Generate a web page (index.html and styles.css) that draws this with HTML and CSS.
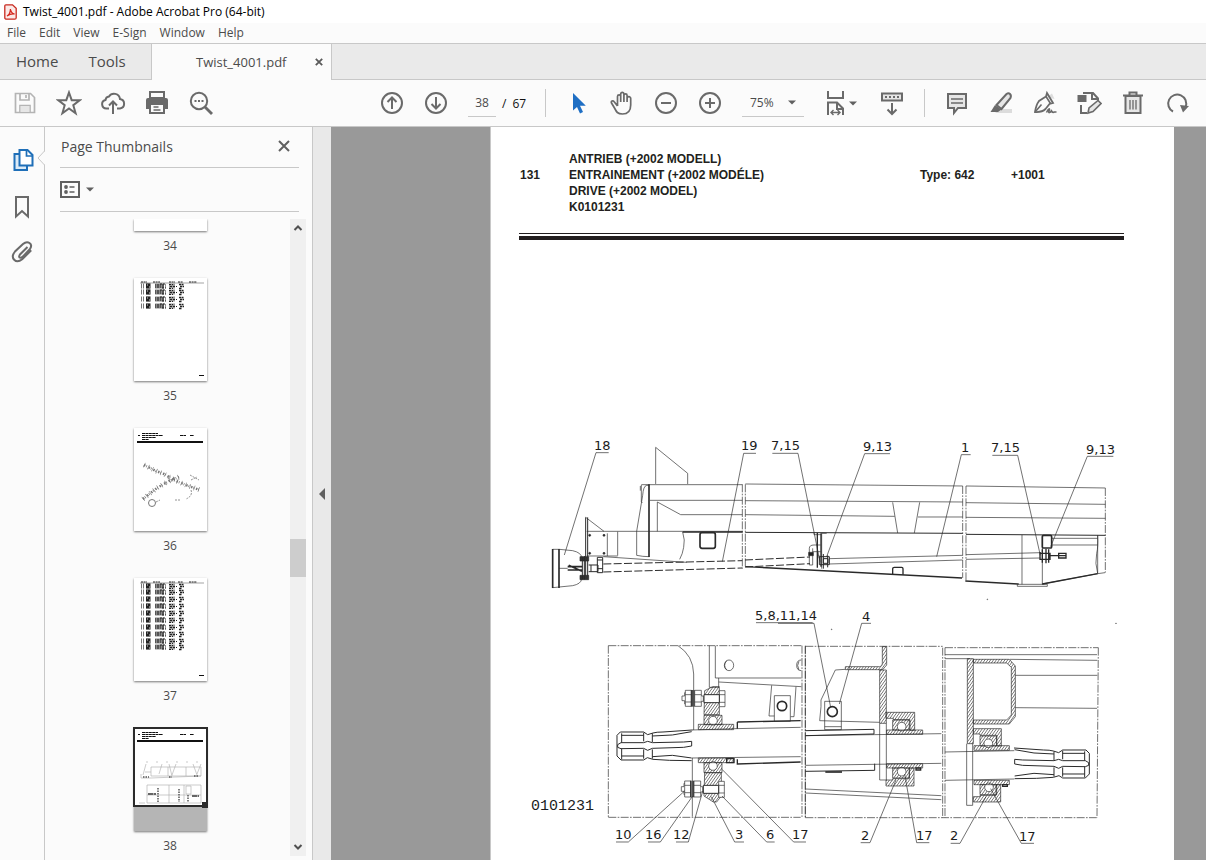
FILE: index.html
```html
<!DOCTYPE html>
<html lang="en">
<head>
<meta charset="utf-8">
<title>Twist_4001.pdf - Adobe Acrobat Pro (64-bit)</title>
<link rel="stylesheet" href="styles.css">
</head>
<body>
<header class="titlebar">
  <svg class="app-icon" viewBox="0 0 13 16"><path d="M1.5.8h7l3.7 3.5v9.4q0 1.5-1.5 1.5h-8Q.8 15.200.8 13.700V2.300Q.8.8 2 .8z" fill="#fbe9e7" stroke="#c8281e" stroke-width="1.300"/><path d="M3 12c2-1 3.300-3.500 3.500-7 .3 3 1.500 4.500 4 5-3-.3-5 .2-7.500 2z" fill="none" stroke="#d5281e" stroke-width="1.300"/></svg>
  <span>Twist_4001.pdf - Adobe Acrobat Pro (64-bit)</span>
</header>
<nav class="menubar">
  <button>File</button><button>Edit</button><button>View</button><button>E-Sign</button><button>Window</button><button>Help</button>
</nav>
<div class="tabs">
  <div class="tabs-fixed"><button>Home</button><button>Tools</button></div>
  <div class="tab-open"><span>Twist_4001.pdf</span><button class="tab-close" aria-label="Close tab"><svg viewBox="0 0 8 8"><path d="M.8.8l6.400 6.400M7.200.8L.8 7.200" stroke="#5a5a5a" stroke-width="1.800"/></svg></button></div>
  <div class="tabs-rest"></div>
</div>
<div class="toolbar">
  <div class="tools">
    <button aria-label="Save"><svg viewBox="0 0 26 26" fill="none" stroke="#b4b4b4" stroke-width="1.700"><path d="M3.500 3.500h15l4 4v15h-19z"/><path d="M8 4v6h9V4M14 5v3M8 22v-6.500h10V22" /><path d="M8.500 16h9v6h-9z" fill="#e6e6e6" stroke="none"/></svg></button>
    <button aria-label="Star"><svg viewBox="0 0 26 26" class="ln"><path d="M13 2.500l2.700 7.700 8 .1-6.400 4.900 2.300 8L13 18.500l-6.600 4.700 2.300-8-6.400-4.900 8-.1z"/></svg></button>
    <button aria-label="Upload to cloud"><svg viewBox="0 0 26 26" class="ln"><path d="M9 18.500H6.500a4.300 4.300 0 01-1-8.500 4 4 0 013.500-3.500 6 6 0 0111 2.500 4.800 4.800 0 010 9.500H17M13 24V12M9 15.500l4-4 4 4"/></svg></button>
    <button aria-label="Print"><svg viewBox="0 0 26 26"><path d="M6 2h14v6H6z" fill="none" stroke="#6a6a6a" stroke-width="2"/><path d="M4 8h18q2 0 2 2v9h-4v-5H6v5H2v-9q0-2 2-2z" fill="#6a6a6a"/><path d="M6 14h14v9H6z" fill="#fbfbfb" stroke="#6a6a6a" stroke-width="2"/><path d="M9.500 17h5M9.500 20h7" stroke="#6a6a6a" stroke-width="1.300"/></svg></button>
    <button aria-label="Find"><svg viewBox="0 0 26 26" class="ln"><circle cx="11" cy="11" r="8.200"/><path d="M17 17l7 7" stroke-width="2.800"/><path d="M6.500 11h2m1.500 0h2m1.500 0h2" stroke-width="2"/></svg></button>
  </div>
  <div class="tools pager">
    <button aria-label="Previous page"><svg viewBox="0 0 26 26" class="ln"><circle cx="13" cy="13" r="10"/><path d="M13 19V8M8.500 12L13 7.500l4.500 4.500"/></svg></button>
    <button aria-label="Next page"><svg viewBox="0 0 26 26" class="ln"><circle cx="13" cy="13" r="10"/><path d="M13 7v11M8.500 14l4.500 4.500 4.500-4.500"/></svg></button>
    <input class="page-no" aria-label="Page number" value="38">
    <span class="page-total"><span>/</span><span>67</span></span>
  </div>
  <div class="tools view-tools">
    <button aria-label="Select"><svg viewBox="0 0 26 26"><path d="M8 3v17.500l4-3.500 3 6.500 3-1.400-3-6.300h5.800z" fill="#1f6fc4"/></svg></button>
    <button aria-label="Hand"><svg viewBox="0 0 26 26" class="ln"><path stroke-width="1.700" d="M8.500 16V6.500a1.600 1.600 0 013.200 0V12M11.700 7V4a1.600 1.600 0 013.200 0v8M14.900 5.500a1.600 1.600 0 013.200 0V12M18.100 12V8.500a1.600 1.600 0 013.600 0V15c0 5-2.200 9-8.200 9-5 0-6-2-8-6l-3-5c-1-2.200 1.500-2.800 2.700-1.200L8.500 16"/></svg></button>
    <button aria-label="Zoom out"><svg viewBox="0 0 26 26" class="ln"><circle cx="13" cy="13" r="10"/><path d="M8 13h10"/></svg></button>
    <button aria-label="Zoom in"><svg viewBox="0 0 26 26" class="ln"><circle cx="13" cy="13" r="10"/><path d="M8 13h10M13 8v10"/></svg></button>
    <div class="zoom"><select aria-label="Zoom level"><option>75%</option></select><svg class="caret" viewBox="0 0 8 5"><path d="M0 .5h8L4 4.500z"/></svg></div>
    <button class="fit" aria-label="Fit width"><svg viewBox="0 0 26 26" class="ln"><path d="M5 1v7h15V1" /><path d="M5 25V12.500h9l6 6V25M14 13v6h6"/><path stroke-width="1.400" d="M8 22.500h9M10.500 20L8 22.500l2.500 2.500M14.500 20l2.500 2.500-2.500 2.500"/></svg><svg class="caret" viewBox="0 0 8 5"><path d="M0 .5h8L4 4.500z"/></svg></button>
    <button aria-label="Read mode"><svg viewBox="0 0 26 26" class="ln"><path d="M3 3.500h20v7H3z" fill="#e6e6e6"/><path d="M6 7h2m2 0h2m2 0h2m2 0h2M13 13v11M8.500 19.500L13 24l4.500-4.500"/></svg></button>
  </div>
  <div class="tools mark-tools">
    <button aria-label="Comment"><svg viewBox="0 0 26 26" class="ln"><path d="M4 4h18v14h-8l-4 5v-5H4z" fill="#e6e6e6"/><path d="M7 9h12M7 13h12" stroke-width="1.300"/></svg></button>
    <button aria-label="Highlight"><svg viewBox="0 0 26 26" class="ln"><path d="M12 19h12v4H7z" fill="#dcdcdc" stroke="none"/><path d="M8.500 15L18.500 4q2-1.500 3.500 0t.5 4L13.500 19z" fill="#e6e6e6"/><path d="M7 15l6.500 4.500-3.500 2.500H2.500z" fill="#6a6a6a" stroke="none"/></svg></button>
    <button aria-label="Sign"><svg viewBox="0 0 26 26" class="ln"><path d="M15 7l5-3.500 2.500 5.500z" fill="#ddd" stroke="none"/><path d="M15 3l-1 3.500-7 4.500q-3 4-4 11 7 .5 10.500-3l4-5 3.500-1z" stroke-width="1.800"/><path d="M14 6.500l4.500 7M3.500 21.500l6-7" stroke-width="1.600"/><path stroke-width="1.600" d="M14.500 22.500c2-4 4-5 2.500-1.500s3 .3 2.500-.5.300 3 3 1.500h2"/></svg></button>
    <button aria-label="Edit"><svg viewBox="0 0 26 26" class="ln"><path d="M7 3h10l5 5.500V11M16 3v6h6M5 15v8h6"/><path d="M1.500 5h9v7h-9z" fill="#6a6a6a" stroke="none"/><path d="M12 23l1-5L22 10.500l3 3L17 21.500z" fill="#e6e6e6" stroke-width="1.600"/></svg></button>
    <button aria-label="Delete"><svg viewBox="0 0 26 26" class="ln"><path d="M5.500 6h15v17h-15z" fill="#e6e6e6"/><path d="M3 5.500h20M9.500 5V2.500h7V5"/><path d="M10 10v9.500m3-9.500v9.500m3-9.500v9.500" stroke-width="1.300"/></svg></button>
    <button aria-label="Rotate"><svg viewBox="0 0 26 26" class="ln"><path d="M9 21.500a9 9 0 1112.500-4.500"/><path d="M16 15l9 1-6 6.500z" fill="#6a6a6a" stroke="none"/></svg></button>
  </div>
</div>
<div class="workspace">
  <nav class="rail">
    <button aria-label="Page thumbnails"><svg viewBox="0 0 26 26" fill="none" stroke="#1f6fb8" stroke-width="2"><path d="M9 7H4.500v16h12.500v-4" fill="#dcebf7"/><path d="M9.500 3h8l5 5v10.500h-13z" fill="#fff"/><path d="M16.500 3v6h6" stroke-width="1.700"/></svg></button>
    <button aria-label="Bookmarks"><svg viewBox="0 0 26 26" class="ln"><path d="M6 4h12v19.500L12 18l-6 5.500z"/></svg></button>
    <button aria-label="Attachments"><svg viewBox="0 0 26 26" class="ln"><path d="M17.500 8l-7.500 7.500q-2 3 .5 3.200 1.500 0 3-1.700l6.500-7q2.500-4-.5-6t-6.500 1L5 12.500q-4 5-.8 8.300t8-.5l9-9"/></svg></button>
    <svg class="notch" viewBox="0 0 8 16"><path d="M8 0v1L1 8l7 7v1z" fill="#fbfbfb"/><path d="M7.500 0v1L1 8l6.500 7v1" fill="none" stroke="#c8c8c8"/></svg>
  </nav>
  <aside class="panel">
    <div class="panel-head"><h2>Page Thumbnails</h2><button aria-label="Close panel"><svg viewBox="0 0 12 12"><path d="M1 1l10 10M11 1L1 11" stroke="#606060" stroke-width="2"/></svg></button></div>
    <div class="panel-opts"><button aria-label="Options"><svg class="opt" viewBox="0 0 20 17"><path d="M1 1h18v15H1z" fill="none" stroke="#606060" stroke-width="2"/><path d="M9.500 6h5M9.500 11h5" stroke="#606060" stroke-width="1.600"/><circle cx="6" cy="6" r="1.900" fill="#606060"/><circle cx="6" cy="11" r="1.900" fill="#606060"/></svg><svg class="caret" viewBox="0 0 8 5"><path d="M0 .5h8L4 4.500z"/></svg></button></div>
    <div class="panel-body">
      <svg width="0" height="0" class="defs"><defs>
        <symbol id="rows" viewBox="0 0 73 7"><g fill="none" stroke="#222">
          <path d="M7 3h4" stroke-width="5" stroke-dasharray="1 1" stroke="#777"/>
          <path d="M12 3h4.500" stroke-width="5.200"/><path d="M13 2h1m1 2h1" stroke="#ccc"/>
          <path d="M21 3h9" stroke-width="5" stroke="#8a8a8a"/><path d="M21 2h12m-12 2h11" stroke-dasharray="1 1 2 1"/><path d="M26 1h5m-3 4h4" stroke-dasharray="2 1"/>
          <path d="M35 3h6" stroke-width="5" stroke="#999"/><path d="M35 1.500h4m-3 2h7m-8 2h4" stroke-dasharray="2 1"/>
          <path d="M45 1.500h5m-4 2h4m-5 2h3" stroke-width="1.300" stroke-dasharray="2 .5"/>
        </g></symbol>
        <symbol id="list-head" viewBox="0 0 73 7"><path d="M6 5h64" stroke="#666" stroke-width=".6"/><path d="M7 4h6m6 0h7m9 0h6m3 0h5m6 0h8" stroke="#222" stroke-dasharray="2 .6"/></symbol>
        <symbol id="doc-head" viewBox="0 0 73 15"><path d="M4 7.500h2M8 5.500h16M8 7.500h21M8 9.500h14M8 11.500h7M46 7.500h6M56 7.500h4" stroke="#111" stroke-width="1.200" stroke-dasharray="3 .4"/><path d="M3 14h66" stroke="#111" stroke-width="2"/></symbol>
      </defs></svg>
      <ol class="thumbs">
        <li><button class="thumb thumb-cut" aria-label="Page 34"></button><span>34</span></li>
        <li><button class="thumb" aria-label="Page 35"><svg viewBox="0 0 73 103"><use href="#list-head" width="73" height="7"/><use href="#rows" y="5" width="73" height="7"/><use href="#rows" y="11" width="73" height="7"/><use href="#rows" y="18" width="73" height="7"/><use href="#rows" y="25" width="73" height="7"/><path d="M65 97.500h5" stroke="#111"/></svg></button><span>35</span></li>
        <li><button class="thumb" aria-label="Page 36"><svg viewBox="0 0 73 103"><use href="#doc-head" width="73" height="15"/><g fill="none" stroke="#777"><path d="M10 37l12 6 8 3 10 6 12 5 14 5M9 71l14-11 12-7 10-4" stroke-width="2.500" stroke-dasharray="1.500 1 .7 2"/><path d="M10 37l12 6 8 3 10 6 12 5 14 5M9 71l14-11 12-7 10-4" stroke-width="5" stroke-dasharray=".6 4"/><circle cx="18" cy="75" r="3.500"/><path d="M56 47l9 5m-8 0l6-3M22 74l4-2M41 72h6M57 62q2 6-5 9" stroke-width=".8" stroke-dasharray="2 1"/></g></svg></button><span>36</span></li>
        <li><button class="thumb" aria-label="Page 37"><svg viewBox="0 0 73 103"><use href="#list-head" width="73" height="7"/><use href="#rows" y="5" width="73" height="7"/><use href="#rows" y="11" width="73" height="7"/><use href="#rows" y="18" width="73" height="7"/><use href="#rows" y="25" width="73" height="7"/><use href="#rows" y="32" width="73" height="7"/><use href="#rows" y="39" width="73" height="7"/><use href="#rows" y="46" width="73" height="7"/><use href="#rows" y="53" width="73" height="7"/><use href="#rows" y="60" width="73" height="7"/><use href="#rows" y="66" width="73" height="7"/><path d="M65 97.500h5" stroke="#111"/></svg></button><span>37</span></li>
        <li><button class="thumb current" aria-label="Page 38"><svg viewBox="0 0 73 103"><path d="M0 79h73v24H0z" fill="#b5b5b5"/><use href="#doc-head" y="-1" width="73" height="15"/><g fill="none" stroke="#aaa" stroke-width=".6"><path d="M17 39h50v9H17zM11 44h6M7 46v4h10l50-2M34 39v9m18-9v9M12 36l-3 11M28 36l-3 10M35 36l3 12M42 36l-4 11M59 36l4 11M67 36l-4 10M13 57h54v18H13zm22 0v18m15-18v18M13 67h54M52 58h5v8h-5z"/><path d="M9 49h6m20 0h3m22-1h4M24 60v14m21-13v13m9-7v7" stroke="#555" stroke-width="1.500" stroke-dasharray="1.500 1"/><path d="M12 34h56" stroke-dasharray="2 8"/><path d="M14 66h8m36 2h7" stroke="#666" stroke-width="2" stroke-dasharray="5 .5"/><path d="M5 75h6"/></g><path d="M0 0h73v78H0z" fill="none" stroke="#2b2b2b" stroke-width="2"/><path d="M68 74h6v6h-6z" fill="#2b2b2b"/></svg></button><span>38</span></li>
      </ol>
      <div class="scrollbar"><svg viewBox="0 0 10 8"><path d="M1.500 6L5 2.500 8.500 6" /></svg><div class="scroll-thumb"></div><svg viewBox="0 0 10 8"><path d="M1.500 2L5 5.500 8.500 2"/></svg></div>
    </div>
  </aside>
  <button class="splitter" aria-label="Hide panel"><svg viewBox="0 0 6 12"><path d="M6 0v12L0 6z" fill="#606060"/></svg></button>
  <main class="viewer">
    <article class="page">
      <header class="page-head">
        <span class="num">131</span>
        <p class="names">ANTRIEB (+2002 MODELL)<br>ENTRAINEMENT (+2002 MODÉLE)<br>DRIVE (+2002 MODEL)<br>K0101231</p>
        <span class="num">Type: 642</span>
        <span class="num">+1001</span>
      </header>
      <div class="rules"></div>
      <svg class="drawing" viewBox="491 240 683 620" role="img" aria-label="Drive shaft drawing 0101231">
        <defs>
          <pattern id="h" width="7" height="7" patternUnits="userSpaceOnUse" patternTransform="rotate(35)"><path d="M0 0v7" stroke="#222" stroke-width="3"/></pattern>
          <g id="bolt" fill="#fff"><path d="M0 18h8v-10h8v34H8V32H0z"/><path d="M10 1h18v48H10zM38 1h20v48H38zM10 14h18M10 36h18M38 14h20M38 36h20"/><path d="M28 0v50m4-50v50m4-50v50" stroke-width="3"/><path d="M58 18h6v16h-6M112 2h17v48h-17zM112 14h17M112 37h17"/><path d="M66 14h46v24H66z" stroke-width="3"/></g>
          <g id="spline"><path d="M0 12L10 2h70l12 8 16-5q10-3 30-3l88-6M0 12v62l12 12h68l11-7 17 5 50 3 66 1M14 6v28M14 52v32M80 4v26M80 54v28M106 6v26M106 54v28" stroke-width="3"/><path d="M2 40l10-6h68l12-4 14 4 94-2 24-2v14l-24 4-94 3-14 6-12-6-68 1-10-4zM14 12h66M14 74h66M106 14l60-3 58-10M106 76l60-4 58 8" stroke-width="3"/></g>
        </defs>
        <g class="draft" transform="translate(540 430) scale(.33333)">
          <path d="M206 68h-38L73 375M648 70h-37L547 395M697 70h77L838 385M840 395l-4-20"/>
          <path d="M347 52v110M347 52l96 78v32M304 164h303M330 211h277M352 216v88M352 216l70 38h185M140 304h467"/>
          <path d="M327 163v218" stroke-width="5"/><path d="M304 165v50l3 4M327 166h-7q-10 2-12 30l-18 108v72q18 4 38 4M301 168v14"/>
          <path d="M137 262v182M143 262v182" stroke-width="3"/><path d="M137 262l55 42M202 310v68M233 305v72M140 378h93M428 306q8 25 3 46-3 20-12 36"/>
          <path d="M428 306h180" stroke-width="4"/><rect x="480" y="308" width="46" height="47" rx="6" stroke-width="5"/>
          <path d="M38 357v117M57 357v117" stroke-width="5"/><path d="M38 358h20l40 4q27 6 27 22M38 473l60-6q25-5 27-20M57 415h26"/>
          <path d="M83 410h44M83 420h44M86 406l40 18" stroke-width="5"/>
          <path d="M120 380v13h26v-13zM120 436v13h26v-13z" fill="#333"/><path d="M127 380v68M133 378v70M146 405h28v20h-28M153 405v20M172 382h16v46h-16zM172 390h16M172 416h16" stroke-width="3"/>
          <path d="M190 380l250 17"/><path d="M190 402l417-10M190 426l417-12M615 390l195-9M615 411l195-10" stroke-width="3" stroke-dasharray="24 7"/>
          <circle cx="149" cy="316" r="3" fill="#222"/><circle cx="192" cy="316" r="3" fill="#222"/><circle cx="149" cy="370" r="3" fill="#222"/><circle cx="192" cy="370" r="3" fill="#222"/>
          <path d="M607 163v253M616 163v247" class="chain"/>
        </g>
        <g class="draft" transform="translate(820 430) scale(.33333)">
          <path d="M-224 162l652 6M438 168l418 6M-224 212l652 4M438 218l418 5M-224 254l448 5M294 261h134M438 262l418 3"/>
          <path d="M-224 307l652 3M438 313l418 3" stroke-width="3"/>
          <path d="M218 217l15 92M299 217l-16 92M20 310h-15v106M-18 308v6h22M-32 355q0-10 14-10h20M-32 355v50h10v-50M-22 365h24"/>
          <path d="M-8 308v105M3 310v100" stroke-width="4"/><path d="M-34 367h14v10h-14z" fill="#222"/>
          <path d="M10 372v44M23 376v36M-2 380h30v24H-2zM10 386h14v14h-14z" stroke-width="3"/>
          <path d="M28 386l400-10M28 402l400-12M438 374l224-6M438 388l224-4"/>
          <path d="M-224 410L426 444M436 453l160 9" stroke-width="4"/><path d="M218 432v-16q0-4 5-4h22q4 0 4 4v18" stroke-width="4"/>
          <path d="M606 315v148M667 315v148" /><path d="M592 463h90v6h-90zM667 462l166-31M833 316v114q-9-30-3-60 5-20 3-54M696 325h137M696 345h137"/>
          <path d="M667 462l166-31" stroke-width="4"/>
          <rect x="667" y="316" width="28" height="38" rx="4" stroke-width="5"/><path d="M660 366v24M667 358v40M678 356v44M686 358v40M660 370h30v18h-30zM690 377h48M716 370h22v14h-22z" stroke-width="4"/>
          <path d="M428 168v276M438 168v284M856 174v254" class="chain"/><path d="M833 431l22-3"/>
          <path d="M210 71h-76L20 380M452 74h-28L350 380M517 76h76l68 300M880 79h-78L692 350"/>
          <circle cx="502" cy="508" r="1"/>
        </g>
        <g class="draft" transform="translate(520 600) scale(.33333)">
          <path d="M265 137h579M265 137v515M265 652h577M846 137v515M856 137v515" class="chain"/>
          <path d="M474 137q46 30 47 85v168M517 474v176M568 137v125M586 137v97M586 234h258M596 246l248 14M568 262h28v-28" />
          <ellipse cx="627" cy="196" rx="14" ry="16"/><path d="M620 182q-12 14 0 28M844 180q-14 0-14 16t14 16M837 184q-8 12 0 26"/>
          <path d="M755 256l-8 92h16M828 260l-6 90h-10M763 287h48v77h-48z"/><circle cx="786" cy="318" r="14" stroke-width="5"/>
          <path d="M554 272l24-12h20v84h-46zM554 518h50v70l-14 18h-10l-28-18z" fill="url(#h)"/>
          <path d="M552 346h54v28h-54zM552 488h54v30h-54z" fill="url(#h)"/><circle cx="579" cy="362" r="13" fill="#fff"/><circle cx="579" cy="498" r="13" fill="#fff"/>
          <path d="M535 373h106v16H535zM535 474h106v14H535z" fill="url(#h)"/>
          <use href="#bolt" x="486" y="270"/><use href="#bolt" x="484" y="542"/>
          <path d="M620 476h22v12h-22zM624 488h10" stroke-width="4"/>
          <path d="M652 366l190-4M652 366v20M652 478v14l190-6M765 490h45" stroke-width="4"/>
          <path d="M516 390l128-4 198-4M516 474l326-4"/>
          <use href="#spline" x="291" y="394"/>
          <path d="M288 726h37L495 572M384 726h37L518 588M468 726h37L548 574M672 726h-28L574 590M764 726h-24L606 588M858 726h-37L606 508M708 68h170"/>
        </g>
        <g class="draft" transform="translate(790 600) scale(.33333)">
          <path d="M46 139h412M46 139v514M46 653h874M458 143v510M465 143h460M465 143v510M925 143l-4 510" class="chain"/>
          <path d="M277 140v50q0 10-8 10H166v9h112l12-14V140zM269 210h20v160h-20z" fill="url(#h)"/>
          <path d="M269 370v170h20V370M166 208l-30 2-43 90v20l-4 42M89 362l180 5M104 304h50v85h-50z"/><circle cx="127" cy="335" r="15" stroke-width="5"/>
          <path d="M46 392l206-4v14l-206 5M46 514l208-3v-20" stroke-width="3"/><path d="M106 516h50" stroke-width="5"/><path d="M46 407l408-6M46 496l408-6M46 567l408 20M46 579l408 20M104 380h50"/>
          <path d="M288 337h86v54h-14v-32h-50v-4h-22zM288 558h84v-54h-14v32h-50v4h-20z" fill="url(#h)"/>
          <path d="M308 360h50v30h-50zM308 504h50v30h-50z" fill="url(#h)"/><circle cx="335" cy="380" r="13" fill="#fff"/><circle cx="335" cy="515" r="13" fill="#fff"/>
          <path d="M290 390h108v13H290zM290 491h108v13H290z" fill="url(#h)"/><path d="M378 504h14v6h-14z" stroke-width="4"/>
          <path d="M465 164h456M465 176h75M660 178l262 3M676 226h246M676 323l245 2"/>
          <path d="M532 176h18v255h-18zM550 178h108l18 20v152l-18 22H550v-12h100l14-15V202l-14-13H550z" fill="url(#h)"/>
          <path d="M530 431v185h18V431"/>
          <path d="M550 386h84v52h-14v-32h-50v-4h-20zM550 606h82v-52h-14v32h-48v4h-20z" fill="url(#h)"/>
          <path d="M570 408h50v30h-50zM570 554h50v30h-50z" fill="url(#h)"/><circle cx="595" cy="430" r="13" fill="#fff"/><circle cx="597" cy="562" r="13" fill="#fff"/>
          <path d="M552 437h106v14H552zM552 541h106v13H552z" fill="url(#h)"/><path d="M638 554h14v5h-14z" stroke-width="4"/>
          <path d="M465 456l208-4M465 541l208-4"/>
          <use href="#spline" transform="translate(898 448) scale(-1 1)"/>
          <path d="M-36 70h108L122 322M243 70h-28L148 312M212 728h28L318 540M418 728h-38L344 522M482 730h28L588 590M732 730h-38L602 566"/>
          <circle cx="978" cy="70" r="1"/><circle cx="125" cy="88" r="1"/>
        </g>
        <g class="labels">
          <text x="594" y="450">18</text><text x="741" y="450">19</text><text x="771" y="450">7,15</text><text x="863" y="451">9,13</text><text x="961" y="452">1</text><text x="991" y="452">7,15</text><text x="1086" y="454">9,13</text>
          <text x="755" y="620">5,8,11,14</text><text x="862" y="621">4</text>
          <text x="615" y="839">10</text><text x="645" y="839">16</text><text x="673" y="839">12</text><text x="735" y="839">3</text><text x="766" y="839">6</text><text x="792" y="839">17</text>
          <text x="861" y="840">2</text><text x="916" y="840">17</text><text x="950" y="840">2</text><text x="1019" y="841">17</text>
        </g>
        <text class="plate" x="531" y="810">0101231</text>
      </svg>
    </article>
  </main>
</div>
</body>
</html>
```
FILE: styles.css
```css
* { box-sizing: border-box; }
body { margin: 0; height: 100vh; display: flex; flex-direction: column; overflow: hidden; background: #fbfbfb; color: #4b4b4b; font: 12px "Open Sans", "Noto Sans", sans-serif; }
button, input, select { font: inherit; color: inherit; background: none; border: 0; padding: 0; margin: 0; }
button { display: flex; align-items: center; justify-content: center; }
svg { display: block; flex: none; }
.ln { fill: none; stroke: #6a6a6a; stroke-width: 2; }
.caret { width: 8px; height: 5px; fill: #606060; }

.titlebar { display: flex; align-items: center; gap: 6px; height: 23px; padding-left: 4px; background: #fff; color: #000; }
.app-icon { width: 13px; height: 16px; }
.menubar { display: flex; align-items: center; gap: 13px; height: 20px; padding: 0 0 2px 7px; }

.tabs { display: flex; height: 37px; border-top: 1px solid #c8c8c8; }
.tabs-fixed { display: flex; gap: 30px; width: 152px; padding: 0 0 2px 16px; background: #eaeaea; border-right: 1px solid #c8c8c8; border-bottom: 1px solid #c8c8c8; font-size: 15px; }
.tab-open { display: flex; align-items: center; justify-content: space-between; width: 179px; padding: 0 8px 0 44px; font-size: 13px; }
.tab-close svg { width: 8px; height: 8px; }
.tabs-rest { flex: 1; background: #eaeaea; border-left: 1px solid #c8c8c8; border-bottom: 1px solid #c8c8c8; }

.toolbar { display: flex; align-items: center; height: 47px; padding-left: 3px; border-bottom: 1px solid #c8c8c8; }
.tools { display: flex; align-items: center; flex: none; }
.tools button { width: 44px; height: 46px; }
.tools button > svg:first-child { width: 26px; height: 26px; }
.pager { margin-left: 147px; width: 176px; height: 28px; border-right: 1px solid #c8c8c8; }
.page-no { width: 28px; height: 28px; margin-left: 10px; text-align: center; border-bottom: 1px solid #c8c8c8; }
.page-total { display: flex; gap: 6px; margin-left: 6px; color: #111; }
.view-tools { margin-left: 10px; }
.zoom { display: flex; align-items: center; width: 62px; height: 28px; margin: 0 10px; padding: 0 8px; border-bottom: 1px solid #c8c8c8; }
.zoom select { flex: 1; appearance: none; }
.tools .fit { width: 56px; padding-right: 4px; }
.mark-tools { margin-left: 10px; padding-left: 10px; height: 28px; border-left: 1px solid #c8c8c8; }

.workspace { display: flex; flex: 1; min-height: 0; }
.rail { position: relative; width: 45px; padding-top: 10px; border-right: 1px solid #c8c8c8; }
.rail button { width: 46px; height: 46px; }
.rail button svg { width: 26px; height: 26px; }
.notch { position: absolute; top: 23px; right: -1px; width: 8px; height: 16px; }

.panel { display: flex; flex-direction: column; width: 268px; border-right: 1px solid #c8c8c8; }
.panel-head, .panel-opts { display: flex; align-items: center; justify-content: space-between; margin: 0 13px 0 15px; border-bottom: 1px solid #c8c8c8; }
.panel-head { height: 41px; padding: 0 9px 2px 1px; }
.panel-head h2 { margin: 0; font-size: 14px; font-weight: 400; }
.panel-head svg { width: 12px; height: 12px; }
.panel-opts { height: 44px; }
.panel-opts button { gap: 6px; }
.opt { width: 20px; height: 17px; }
.panel-body { display: flex; flex: 1; min-height: 0; margin-top: 7px; padding: 0 6px 4px 5px; }
.defs { position: absolute; }
.thumbs { flex: 1; display: flex; flex-direction: column; align-items: center; gap: 17px; margin: 0; padding: 0; list-style: none; overflow: hidden; }
.thumbs li { display: flex; flex-direction: column; align-items: center; flex: none; }
.thumbs li > span { line-height: 30px; }
.thumb { width: 73px; height: 103px; background: #fff; box-shadow: 0 1px 2px #777; }
.thumb svg { width: 73px; height: 103px; overflow: visible; }
.thumb-cut { height: 12px; }
.scrollbar { display: flex; flex-direction: column; align-items: center; width: 16px; padding: 5px 0; background: #f0f0f0; }
.scrollbar svg { width: 10px; height: 8px; fill: none; stroke: #505050; stroke-width: 2; }
.scroll-thumb { width: 16px; height: 38px; background: #cdcdcd; margin: 307px 0 auto; }
.splitter { width: 18px; background: #e9e9e9; }
.splitter svg { width: 6px; height: 12px; }

.viewer { flex: 1; min-width: 0; padding: 0 32px 0 159px; background: #999; overflow: hidden; }
.page { min-height: 100%; background: #fff; border-left: 1px solid #c8c8c8; color: #231f20; }
.page-head { display: grid; grid-template-columns: 49px 1fr 91px 113px; padding: 24px 50px 0 29px; font: bold 12px/16px "Liberation Sans", sans-serif; }
.page-head .num { padding-top: 16px; }
.page-head .names { margin: 0; }
.rules { height: 7px; margin: 18px 50px 0 28px; border-top: 1px solid #231f20; border-bottom: 4px solid #231f20; }
.drawing { width: 100%; height: auto; }
.draft { fill: none; stroke: #2a2a2a; stroke-width: 2; }
.chain { stroke-dasharray: 24 4 5 4; stroke-width: 2; }
.labels { font: 13px "DejaVu Sans", sans-serif; fill: #1c1c1c; }
.plate { font: 15px "Liberation Mono", monospace; fill: #1c1c1c; }
```
